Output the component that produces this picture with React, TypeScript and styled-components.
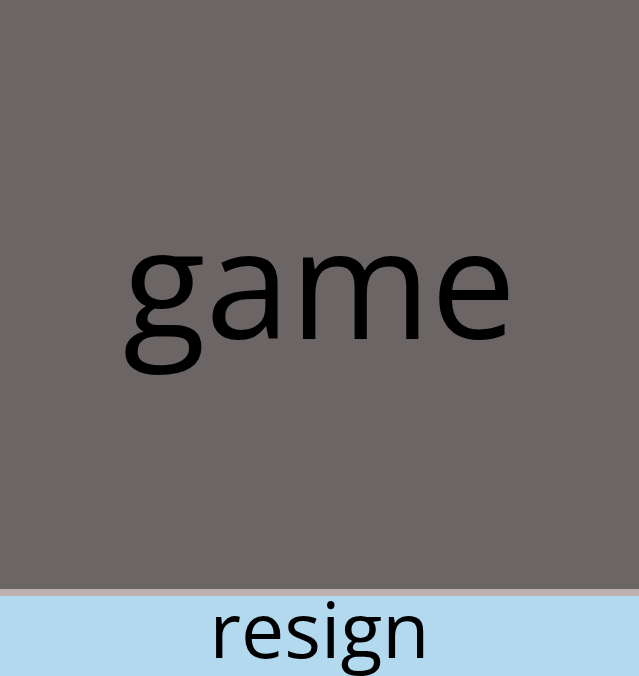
import React from "react";
import styled, { createGlobalStyle } from "styled-components";

const Global = createGlobalStyle`
  html, body { margin: 0; padding: 0; background: #b3d9ef; }
  body { font-family: "Open Sans", "Liberation Sans", sans-serif; overflow: hidden; }
`;

const Page = styled.div`
  display: flex;
  flex-direction: column;
  width: 639px;
`;

const Board = styled.div`
  height: 589px;
  background: #6b6565;
  display: flex;
  align-items: center;
  justify-content: center;
`;

const BoardLabel = styled.span`
  font-size: 152px;
  line-height: 1;
  color: #000;
  transform: translateY(-14px);
`;

const ActionBar = styled.button`
  height: 120px;
  border: none;
  border-top: 7px solid #bcb0b0;
  background: #b3d9ef;
  padding: 0;
  display: flex;
  justify-content: center;
  align-items: flex-start;
  font-family: inherit;
  font-size: 77px;
  line-height: 0.86;
  color: #000;
  cursor: pointer;
`;

export default function App() {
  return (
    <>
      <Global />
      <Page>
        <Board>
          <BoardLabel>game</BoardLabel>
        </Board>
        <ActionBar>resign</ActionBar>
      </Page>
    </>
  );
}
